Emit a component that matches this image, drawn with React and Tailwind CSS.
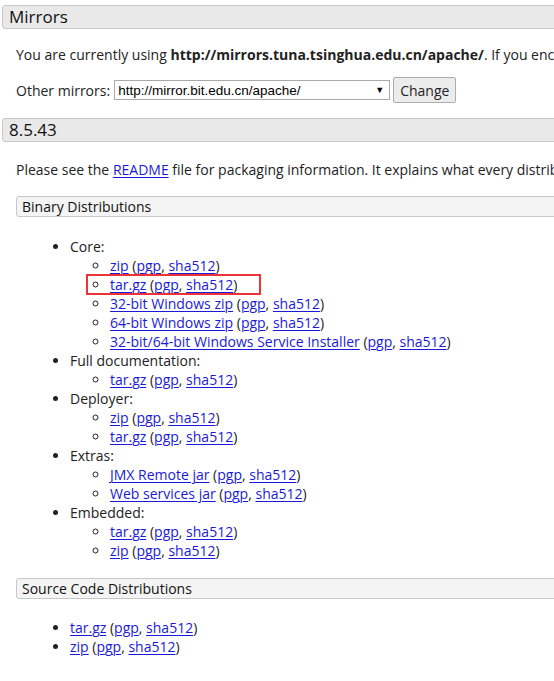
import React from "react";

const L = ({ children }) => (
  <a href="#" className="text-[#1a1ad8] underline underline-offset-[2px] decoration-[1px]">
    {children}
  </a>
);

const Sig = ({ name }) => (
  <>
    <L>{name}</L> (<L>pgp</L>, <L>sha512</L>)
  </>
);

export default function App() {
  return (
    <div className="w-[554px] h-[681px] overflow-hidden bg-white font-['Open_Sans',sans-serif] text-[14px] leading-[19px] text-[#222]">
      <div className="w-[1000px]">
        <h2 className="mt-[5px] ml-[2px] h-[24px] border border-[#c8c8c8] rounded-[3px] bg-[#e9e9e9] pl-[6px] text-[17px] leading-[22px] font-normal text-[#111]">
          Mirrors
        </h2>
        <p className="mt-[16px] pl-[16px]">
          You are currently using{" "}
          <b className="font-bold">http://mirrors.tuna.tsinghua.edu.cn/apache/</b>. If you encounter a problem with this mirror, please select another mirror.
        </p>
        <div className="mt-[13px] pl-[16px] flex items-center h-[26px]">
          <span>Other mirrors:</span>
          <div className="ml-[4px] w-[276px] h-[20px] border border-[#a9a9a9] bg-white flex items-center justify-between pl-[3px] pr-[5px] font-['Liberation_Sans',sans-serif] text-[13.5px] text-black">
            <span>http://mirror.bit.edu.cn/apache/</span>
            <span className="text-[9px]">▼</span>
          </div>
          <div className="ml-[3px] h-[26px] px-[6px] border border-[#adadad] rounded-[2px] bg-[#ececec] flex items-center text-[14px] text-[#222]">
            Change
          </div>
        </div>
        <h2 className="mt-[15px] ml-[2px] h-[24px] border border-[#c8c8c8] rounded-[3px] bg-[#e9e9e9] pl-[6px] text-[17px] leading-[22px] font-normal text-[#111]">
          8.5.43
        </h2>
        <p className="mt-[18px] pl-[16px]">
          Please see the <L>README</L> file for packaging information. It explains what every distribution contains.
        </p>
        <h3 className="mt-[17px] ml-[16px] h-[21px] border border-[#c8c8c8] rounded-[3px] bg-[#f4f4f4] pl-[5px] text-[14px] leading-[19px] font-normal text-[#111]">
          Binary Distributions
        </h3>
        <ul className="mt-[20px] list-disc pl-[70px]">
          <li>
            Core:
            <ul className="list-[circle] pl-[40px]">
              <li><Sig name="zip" /></li>
              <li className="relative">
                <Sig name="tar.gz" />
                <div className="absolute left-[-24px] top-[-1px] w-[175px] h-[21px] border-2 border-[#ee3338]" />
              </li>
              <li><Sig name="32-bit Windows zip" /></li>
              <li><Sig name="64-bit Windows zip" /></li>
              <li><Sig name="32-bit/64-bit Windows Service Installer" /></li>
            </ul>
          </li>
          <li>
            Full documentation:
            <ul className="list-[circle] pl-[40px]">
              <li><Sig name="tar.gz" /></li>
            </ul>
          </li>
          <li>
            Deployer:
            <ul className="list-[circle] pl-[40px]">
              <li><Sig name="zip" /></li>
              <li><Sig name="tar.gz" /></li>
            </ul>
          </li>
          <li>
            Extras:
            <ul className="list-[circle] pl-[40px]">
              <li><Sig name="JMX Remote jar" /></li>
              <li><Sig name="Web services jar" /></li>
            </ul>
          </li>
          <li>
            Embedded:
            <ul className="list-[circle] pl-[40px]">
              <li><Sig name="tar.gz" /></li>
              <li><Sig name="zip" /></li>
            </ul>
          </li>
        </ul>
        <h3 className="mt-[18px] ml-[16px] h-[21px] border border-[#c8c8c8] rounded-[3px] bg-[#f4f4f4] pl-[5px] text-[14px] leading-[19px] font-normal text-[#111]">
          Source Code Distributions
        </h3>
        <ul className="mt-[19px] list-disc pl-[70px]">
          <li><Sig name="tar.gz" /></li>
          <li><Sig name="zip" /></li>
        </ul>
      </div>
    </div>
  );
}
